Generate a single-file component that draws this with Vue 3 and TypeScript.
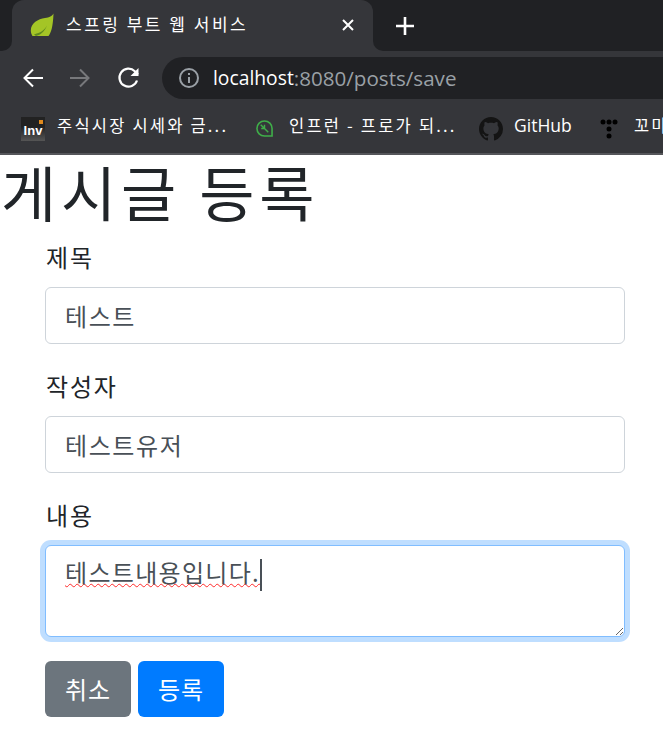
<script setup lang="ts">
const title = '스프링 부트 웹 서비스'
</script>

<template>
  <div class="page">
    <header class="chrome">
      <div class="tabstrip">
        <div class="edge-left"></div>
        <div class="tab">
          <svg class="favicon" viewBox="0 0 24 24" width="24" height="24">
            <path d="M23.500 0.500C22 3.500 19.500 4.200 15 5 8 6 1 10 0.800 17.500c0 2.200.7 4 1.700 5.500h16c2.500-3 4.500-9 5-22.500z" fill="#a4c526" />
            <path d="M4 21.500c3-1.500 9-1.500 13-9 -2 5-5 9-11 10.500z" fill="#5f8a1e" />
          </svg>
          <span class="tab-title">{{ title }}</span>
          <svg class="close" viewBox="0 0 14 14" width="14" height="14">
            <path d="M2 2l10 10M12 2L2 12" stroke="#fff" stroke-width="2" />
          </svg>
        </div>
        <div class="edge-right">
          <svg class="plus" viewBox="0 0 20 20" width="20" height="20">
            <path d="M10 1v18M1 10h18" stroke="#fff" stroke-width="2.600" />
          </svg>
        </div>
      </div>
      <div class="toolbar">
        <svg class="nav" viewBox="0 0 24 24" width="24" height="24">
          <path d="M22 12H4M12 3.500L3.500 12l8.500 8.500" stroke="#fff" stroke-width="2" fill="none" />
        </svg>
        <svg class="nav" viewBox="0 0 24 24" width="24" height="24">
          <path d="M2 12h18M12 3.500l8.500 8.500-8.500 8.500" stroke="#77787b" stroke-width="2" fill="none" />
        </svg>
        <svg class="nav reload" viewBox="0 0 24 24" width="24" height="24">
          <path d="M20 14.500A9 9 0 1 1 17.800 5.200L21 8.500" stroke="#fff" stroke-width="2.200" fill="none" />
          <path d="M21.500 2v8h-8z" fill="#fff" />
        </svg>
        <div class="omnibox">
          <svg class="info" viewBox="0 0 20 20" width="20" height="20">
            <circle cx="10" cy="10" r="9" stroke="#9aa0a6" stroke-width="2" fill="none" />
            <path d="M9 5h2v2H9zM9 9h2v6H9z" fill="#9aa0a6" />
          </svg>
          <span class="host">localhost</span><span class="path">:8080/posts/save</span>
        </div>
      </div>
      <div class="bookmarks">
        <div class="bookmark first">
          <div class="inv"><span>Inv</span><i></i></div>
          <span class="label-text">주식시장 시세와 금...</span>
        </div>
        <div class="bookmark second">
          <svg viewBox="0 0 18 18" width="17" height="17">
            <path d="M9 1a8 8 0 1 0 0 16h8V9a8 8 0 0 0-8-8z" stroke="#3fae49" stroke-width="1.700" fill="none" />
            <path d="M5 5l8 8M9 9V5M9 9H5.500" stroke="#3fae49" stroke-width="1.500" fill="none" />
          </svg>
          <span class="label-text">인프런 - 프로가 되...</span>
        </div>
        <div class="bookmark third">
          <svg viewBox="0 0 16 16" width="24" height="24">
            <path fill="#141414" d="M8 0C3.580 0 0 3.580 0 8c0 3.540 2.290 6.530 5.470 7.590.4.070.55-.17.55-.38 0-.19-.01-.82-.01-1.490-2.010.37-2.530-.49-2.690-.94-.09-.23-.48-.94-.82-1.130-.28-.15-.68-.52-.01-.53.63-.01 1.080.58 1.230.82.720 1.210 1.870.870 2.330.660.070-.520.280-.870.510-1.070-1.780-.2-3.640-.890-3.640-3.950 0-.870.310-1.590.820-2.150-.080-.2-.360-1.020.080-2.120 0 0 .670-.210 2.200.820.640-.180 1.320-.270 2-.270s1.360.090 2 .270c1.530-1.040 2.200-.820 2.200-.820.440 1.100.160 1.920.080 2.120.510.560.820 1.270.820 2.150 0 3.070-1.870 3.750-3.650 3.950.290.250.540.730.540 1.480 0 1.070-.010 1.930-.010 2.200 0 .210.150.460.550.380A8.010 8.010 0 0 0 16 8c0-4.420-3.580-8-8-8z" />
          </svg>
          <span class="label-text">GitHub</span>
        </div>
        <div class="bookmark fourth">
          <svg viewBox="0 0 18 20" width="18" height="20">
            <circle cx="3" cy="3" r="2.500" fill="#000" />
            <circle cx="9" cy="3" r="2.500" fill="#000" />
            <circle cx="15" cy="3" r="2.500" fill="#000" />
            <circle cx="9" cy="10" r="2.500" fill="#000" />
            <circle cx="9" cy="17" r="2.500" fill="#000" />
          </svg>
          <span class="label-text">꼬마</span>
        </div>
      </div>
    </header>

    <main>
      <h1>게시글 등록</h1>
      <form class="form" @submit.prevent>
        <div class="group">
          <label for="title">제목</label>
          <input id="title" class="control" type="text" value="테스트" readonly />
        </div>
        <div class="group">
          <label for="author">작성자</label>
          <input id="author" class="control" type="text" value="테스트유저" readonly />
        </div>
        <div class="group">
          <label>내용</label>
          <div class="control area">
            <span class="typo">테스트내용입니다.</span><span class="caret"></span>
          </div>
        </div>
        <div class="actions">
          <button type="button" class="btn secondary">취소</button>
          <button type="button" class="btn primary">등록</button>
        </div>
      </form>
    </main>
  </div>
</template>

<style>
html, body { margin: 0; background: #fff; }
</style>

<style scoped>
.page {
  width: 663px;
  height: 739px;
  overflow: hidden;
  font-family: "Noto Sans CJK KR", "Noto Sans", sans-serif;
  color: #212529;
}
.chrome {
  height: 155px;
  display: flex;
  flex-direction: column;
  background: #35363a;
  box-sizing: border-box;
  border-bottom: 2px solid #55565a;
  color: #fff;
}
.tabstrip {
  height: 51px;
  display: flex;
  background: linear-gradient(#202124 50%, #35363a 50%);
}
.edge-left {
  width: 12px;
  background: #202124;
  border-bottom-right-radius: 10px;
}
.tab {
  width: 361px;
  background: #35363a;
  border-radius: 12px 12px 0 0;
  display: flex;
  align-items: center;
  box-sizing: border-box;
  padding: 0 18px 1px 18px;
}
.favicon { flex: none; }
.tab-title {
  margin-left: 12px;
  padding-bottom: 3px;
  font-size: 17px;
  letter-spacing: 2.500px;
  white-space: nowrap;
  flex: 1;
}
.edge-right {
  flex: 1;
  background: #202124;
  border-bottom-left-radius: 10px;
  display: flex;
  align-items: center;
  padding-left: 22px;
}
.toolbar {
  height: 53px;
  display: flex;
  align-items: center;
  padding-left: 21px;
  gap: 23px;
  flex: none;
}
.nav { flex: none; }
.reload { margin-left: 2px; margin-right: -2px; }
.omnibox {
  flex: 1;
  height: 42px;
  margin-left: 0;
  margin-right: -20px;
  background: #202124;
  border-radius: 21px 0 0 21px;
  display: flex;
  align-items: center;
  padding-left: 17px;
  font-family: "Open Sans", sans-serif;
  font-size: 20px;
  white-space: nowrap;
}
.info { margin-right: 14px; flex: none; }
.host { color: #fff; font-size: 19.300px; }
.path { color: #9aa0a6; font-size: 20.600px; }
.bookmarks {
  flex: 1;
  display: flex;
  align-items: center;
  font-size: 16.500px;
  letter-spacing: 2.200px;
  white-space: nowrap;
  overflow: hidden;
}
.bookmark { display: flex; align-items: center; flex: none; }
.label-text { padding-bottom: 7px; }
.first { margin-left: 21px; width: 235px; gap: 12px; }
.second { gap: 16px; width: 223px; }
.third { gap: 11px; width: 121px; letter-spacing: 0; }
.fourth { gap: 16px; }
.third span { font-family: "Open Sans", sans-serif; font-size: 17.500px; }
.inv {
  width: 24px;
  height: 24px;
  background: linear-gradient(#222 40%, #555);
  position: relative;
  font: 700 13px/27px "Liberation Sans", sans-serif;
  letter-spacing: 0;
  text-align: center;
  color: #fff;
}
.inv i {
  position: absolute;
  right: 2px;
  top: 3px;
  width: 4px;
  height: 4px;
  background: #e08a1e;
}
main { display: block; }
h1 {
  margin: 0 0 12px;
  font-size: 60px;
  font-weight: 400;
  line-height: 72px;
  letter-spacing: 4.800px;
  padding-left: 1px;
}
.form { padding: 0 38px 0 45px; }
.group { margin-bottom: 24px; }
label {
  display: block;
  font-size: 24px;
  line-height: 35px;
  padding-bottom: 1px;
  padding-left: 1px;
  margin-bottom: 12px;
  letter-spacing: 1.800px;
}
.control {
  display: block;
  width: 100%;
  height: 57px;
  box-sizing: border-box;
  padding: 9px 18px 9px 19px;
  border: 1.500px solid #ced4da;
  border-radius: 6px;
  font: 400 24px/36px "Noto Sans CJK KR", sans-serif;
  letter-spacing: 1.600px;
  color: #495057;
  outline: none;
  background: #fff;
}
.area {
  height: 92px;
  min-height: 92px;
  padding-top: 8px;
  border-color: #80bdff;
  box-shadow: 0 0 0 5px rgba(0, 123, 255, 0.25);
  resize: both;
  overflow: auto;
  white-space: nowrap;
  letter-spacing: 1.300px;
}
.typo {
  text-decoration: underline wavy #ff2a2a 1px;
  text-underline-offset: 1px;
}
.caret {
  display: inline-block;
  width: 2px;
  height: 32px;
  background: #495057;
  vertical-align: middle;
}
.actions { display: flex; gap: 7px; }
.btn {
  width: 86px;
  height: 56px;
  border: none;
  border-radius: 6px;
  color: #fff;
  font: 400 24px/36px "Noto Sans CJK KR", sans-serif;
  letter-spacing: 1px;
  padding: 0;
}
.secondary { background: #6c757d; }
.primary { background: #007bff; }
</style>
